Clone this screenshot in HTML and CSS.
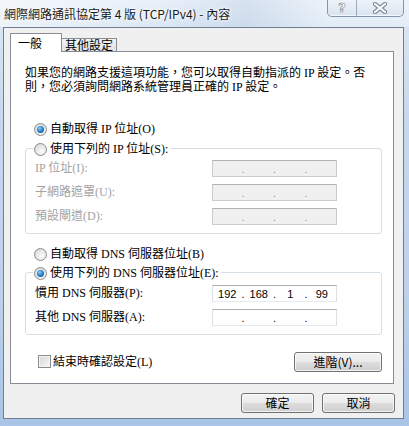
FILE: index.html
```html
<!DOCTYPE html>
<html>
<head>
<meta charset="utf-8">
<link rel="stylesheet" href="styles.css">
</head>
<body>
<div class="window">
  <div class="titlebar">
    <div class="title">網際網路通訊協定第 4 版 (TCP/IPv4) - 內容</div>
    <div class="caption-btns">
      <div class="cbtn help">?</div>
      <div class="cbtn close">
        <svg width="18" height="12" viewBox="0 0 18 12">
          <path d="M4 2 L14 10 M14 2 L4 10" stroke="#7a8696" stroke-width="4.2" stroke-linecap="round" fill="none"/>
          <path d="M4 2 L14 10 M14 2 L4 10" stroke="#ffffff" stroke-width="2.2" stroke-linecap="round" fill="none"/>
        </svg>
      </div>
    </div>
  </div>
  <div class="client">
    <div class="tabs">
      <div class="tab active">一般</div>
      <div class="tab">其他設定</div>
    </div>
    <div class="panel">
      <p class="intro">如果您的網路支援這項功能，您可以取得自動指派的 IP 設定。否<br>則，您必須詢問網路系統管理員正確的 IP 設定。</p>

      <div class="opt opt-ip"><span class="radio checked"></span>自動取得 IP 位址(O)</div>
      <div class="group g1">
        <div class="legend"><span class="radio"></span>使用下列的 IP 位址(S):</div>
        <div class="rows">
          <div class="row disabled"><span class="lbl">IP 位址(I):</span>
            <div class="ipbox off"><span class="seg"></span><span class="dot">.</span><span class="seg"></span><span class="dot">.</span><span class="seg"></span><span class="dot">.</span><span class="seg"></span></div>
          </div>
          <div class="row disabled"><span class="lbl">子網路遮罩(U):</span>
            <div class="ipbox off"><span class="seg"></span><span class="dot">.</span><span class="seg"></span><span class="dot">.</span><span class="seg"></span><span class="dot">.</span><span class="seg"></span></div>
          </div>
          <div class="row disabled"><span class="lbl">預設閘道(D):</span>
            <div class="ipbox off"><span class="seg"></span><span class="dot">.</span><span class="seg"></span><span class="dot">.</span><span class="seg"></span><span class="dot">.</span><span class="seg"></span></div>
          </div>
        </div>
      </div>

      <div class="opt opt-dns"><span class="radio"></span>自動取得 DNS 伺服器位址(B)</div>
      <div class="group g2">
        <div class="legend"><span class="radio checked"></span>使用下列的 DNS 伺服器位址(E):</div>
        <div class="rows">
          <div class="row"><span class="lbl">慣用 DNS 伺服器(P):</span>
            <div class="ipbox"><span class="seg">192</span><span class="dot">.</span><span class="seg">168</span><span class="dot">.</span><span class="seg">1</span><span class="dot">.</span><span class="seg">99</span></div>
          </div>
          <div class="row"><span class="lbl">其他 DNS 伺服器(A):</span>
            <div class="ipbox"><span class="seg"></span><span class="dot">.</span><span class="seg"></span><span class="dot">.</span><span class="seg"></span><span class="dot">.</span><span class="seg"></span></div>
          </div>
        </div>
      </div>

      <div class="bottom-row">
        <span class="check"></span><span class="check-lbl">結束時確認設定(L)</span>
        <div class="btn adv">進階(V)...</div>
      </div>
    </div>
    <div class="footer">
      <div class="btn">確定</div>
      <div class="btn">取消</div>
    </div>
  </div>
</div>
</body>
</html>
```
FILE: styles.css
```css
* { box-sizing: border-box; }
html, body { margin: 0; padding: 0; }
body {
  width: 409px;
  height: 426px;
  overflow: hidden;
  font-family: "Liberation Serif", "Noto Sans CJK TC", serif;
  font-size: 12px;
  color: #000;
}
.window {
  width: 409px;
  height: 426px;
  display: flex;
  flex-direction: column;
  background: linear-gradient(to bottom, #e6eef8 0px, #d8e5f3 24px, #c6d8ee 120px, #bcd1ea 300px, #a9c4e6 426px);
}
.titlebar {
  height: 27px;
  display: flex;
  align-items: flex-start;
  background: linear-gradient(100deg, rgba(255,255,255,0.55) 0%, rgba(255,255,255,0.1) 40%, rgba(170,190,215,0.25) 60%, rgba(255,255,255,0.3) 80%);
}
.title {
  font-family: "Noto Sans CJK TC", sans-serif;
  font-size: 12px;
  line-height: 16px;
  margin: 6px 0 0 4px;
  color: #1a1a1a;
  text-shadow: 0 0 5px #fff, 0 0 3px #fff;
  white-space: nowrap;
}
.caption-btns {
  margin-left: auto;
  margin-right: 5px;
  display: flex;
  height: 17px;
  border: 1px solid #8395ab;
  border-top: none;
  border-radius: 0 0 5px 5px;
  background: linear-gradient(to bottom, #edf3f9, #d8e4f0);
  box-shadow: inset 0 -1px 0 rgba(255,255,255,0.7);
}
.cbtn {
  display: flex;
  align-items: center;
  justify-content: center;
  height: 16px;
}
.help {
  width: 29px;
  border-right: 1px solid #9aa9bb;
  font-family: "DejaVu Sans", sans-serif;
  font-weight: bold;
  font-size: 13px;
  color: #fff;
  -webkit-text-stroke: 0.6px #7a8696;
  line-height: 16px;
}
.close { width: 46px; }

.client {
  margin: 0 5px 0 3px;
  height: 392px;
  border: 1px solid #6e7f94;
  background: #f0f0f0;
  padding: 6px 0 0 6px;
  display: flex;
  flex-direction: column;
}
.tabs {
  display: flex;
  align-items: flex-end;
  height: 18px;
  margin-bottom: -1px;
  position: relative;
  z-index: 1;
  font-family: "Noto Sans CJK TC", sans-serif;
}
.tab {
  width: 55px;
  height: 13px;
  margin-bottom: 1px;
  border: 1px solid #898c95;
  border-bottom: none;
  border-left: none;
  background: linear-gradient(to bottom, #f2f2f2, #e3e3e3);
  line-height: 12px;
  padding-left: 3px;
  font-size: 12px;
  color: #000;
}
.tab.active {
  width: 52px;
  height: 19px;
  margin-bottom: 0;
  border-left: 1px solid #898c95;
  background: #fff;
  line-height: 14px;
  padding: 2px 0 0 7px;
}
.panel {
  width: 384px;
  height: 333px;
  border: 1px solid #898c95;
  background: #fff;
  display: flex;
  flex-direction: column;
}
.intro {
  margin: 14px 0 0 14px;
  line-height: 14px;
  white-space: nowrap;
}
.opt {
  display: flex;
  align-items: center;
  height: 16px;
  padding-left: 23px;
  line-height: 16px;
}
.opt-ip { margin-top: 27px; }
.opt-dns { margin-top: 12px; }
.radio {
  display: inline-block;
  width: 13px;
  height: 13px;
  border-radius: 50%;
  border: 1px solid #8a8c8e;
  background: radial-gradient(circle at 60% 65%, #fbfbfb 0%, #e9e9e9 45%, #cfd1d3 100%);
  margin-right: 3px;
  position: relative;
  flex: none;
}
.radio.checked::after {
  content: "";
  position: absolute;
  left: 2px;
  top: 2px;
  width: 7px;
  height: 7px;
  border-radius: 50%;
  background: radial-gradient(circle at 40% 35%, #8fd0fb 0%, #2b86cf 45%, #0d4b8c 100%);
}
.group {
  margin-left: 14px;
  width: 357px;
  border: 1px solid #d5dfe5;
  border-radius: 3px;
}
.g1 { margin-top: 11px; height: 86px; }
.g2 { margin-top: 10px; height: 63px; }
.legend {
  display: flex;
  align-items: center;
  width: fit-content;
  height: 16px;
  margin: -8px 0 0 7px;
  padding: 0 2px 0 1px;
  background: #fff;
  line-height: 16px;
}
.rows {
  display: flex;
  flex-direction: column;
  gap: 7px;
  margin-top: 3px;
}
.g2 .rows { margin-top: 4px; }
.row {
  display: flex;
  align-items: center;
  height: 17px;
  padding-left: 9px;
}
.row.disabled { color: #a3a3a3; }
.lbl {
  width: 177px;
  line-height: 17px;
  white-space: nowrap;
}
.ipbox {
  width: 125px;
  height: 17px;
  display: flex;
  align-items: center;
  border: 1px solid #dbdfe6;
  border-top-color: #abadb3;
  border-bottom-color: #e3e9ef;
  background: #fff;
  font-family: "Liberation Sans", sans-serif;
  font-size: 11px;
  line-height: 15px;
  color: #000;
  padding-top: 1px;
}
.ipbox.off {
  background: #f0f0f0;
  border-color: #c9cccf;
  border-top-color: #adb2b5;
  color: #8c8c8c;
}
.seg { flex: 1; text-align: center; }
.dot { width: 3px; text-align: center; }
.bottom-row {
  display: flex;
  align-items: center;
  margin-top: 17px;
  height: 20px;
  padding-left: 27px;
}
.check {
  width: 13px;
  height: 13px;
  border: 1px solid #8a8c8e;
  background: linear-gradient(135deg, #d6d6d6, #f7f7f7);
  box-shadow: inset 0 0 0 1px #f4f4f4;
  margin-right: 2px;
  margin-top: -2px;
  flex: none;
}
.check-lbl { line-height: 16px; }
.btn {
  width: 73px;
  height: 20px;
  border: 1px solid #707070;
  border-radius: 3px;
  background: linear-gradient(to bottom, #f2f2f2 0%, #ebebeb 49%, #dddddd 50%, #cfcfcf 100%);
  box-shadow: inset 0 0 0 1px rgba(255,255,255,0.75);
  font-family: "Noto Sans CJK TC", sans-serif;
  font-size: 12px;
  line-height: 17px;
  text-align: center;
  color: #000;
}
.btn.adv {
  width: 88px;
  margin-left: auto;
  margin-right: 11px;
}
.footer {
  display: flex;
  justify-content: flex-end;
  gap: 8px;
  margin-top: 9px;
  margin-right: 8px;
}
```
